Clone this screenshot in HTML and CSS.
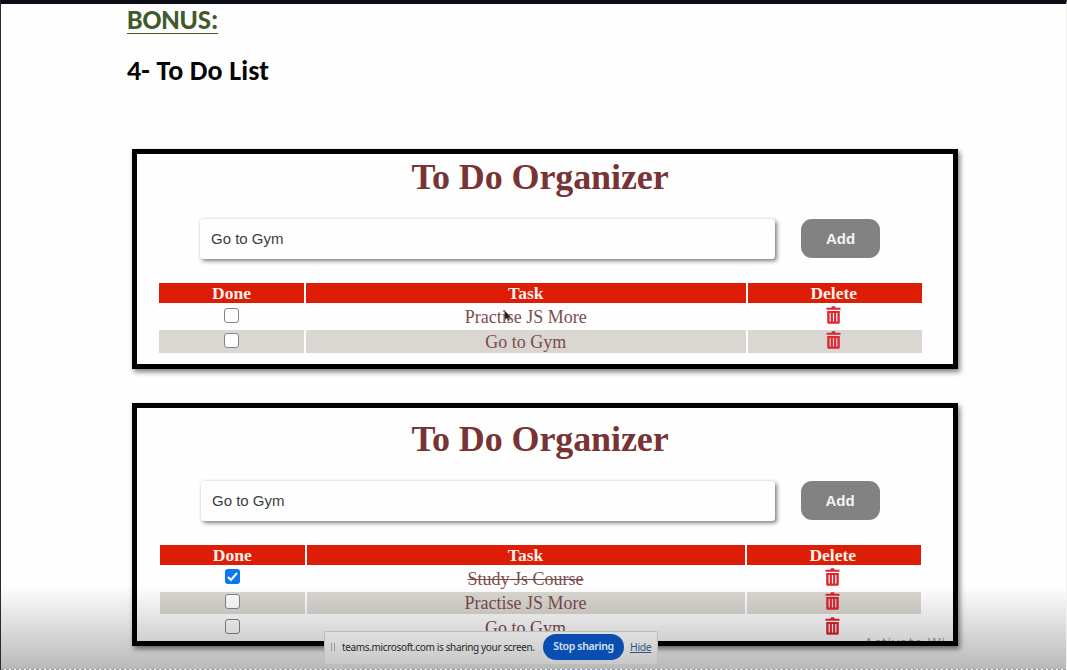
FILE: index.html
```html
<!DOCTYPE html>
<html lang="en">
<head>
<meta charset="utf-8">
<title>To Do List</title>
<link rel="stylesheet" href="styles.css">
</head>
<body>
<svg width="0" height="0" class="defs">
  <symbol id="trash" viewBox="0 0 15 18">
    <path fill-rule="evenodd" d="M6 .3h3l.7 1.5h4.8v2H.5v-2h4.8zM1.2 5h12.6v11.2q0 1.5-1.5 1.5H2.7q-1.5 0-1.5-1.5zM3.6 7v8.5h1.2V7zm3.3 0v8.5h1.2V7zm3.3 0v8.5h1.2V7z"/>
  </symbol>
</svg>
<main class="page">
  <h1 class="bonus">BONUS:</h1>
  <h2 class="heading">4- To Do List</h2>
  <section class="panel first">
    <h3 class="title">To Do Organizer</h3>
    <div class="form"><div class="field">Go to Gym</div><div class="add">Add</div></div>
    <div class="table">
      <div class="row head"><div>Done</div><div>Task</div><div>Delete</div></div>
      <div class="row"><div><span class="box"></span></div><div><span class="task">Practise JS More</span></div><div><svg class="trash"><use href="#trash"/></svg></div></div>
      <div class="row shade"><div><span class="box"></span></div><div><span class="task gym">Go to Gym</span></div><div><svg class="trash"><use href="#trash"/></svg></div></div>
    </div>
  </section>
  <section class="panel second">
    <h3 class="title">To Do Organizer</h3>
    <div class="form"><div class="field">Go to Gym</div><div class="add">Add</div></div>
    <div class="table">
      <div class="row head"><div>Done</div><div>Task</div><div>Delete</div></div>
      <div class="row"><div><span class="box checked"><svg viewBox="0 0 15 15"><path d="M3 8l3 3 6-7" fill="none" stroke="#fff" stroke-width="2"/></svg></span></div><div><span class="task struck">Study Js Course</span></div><div><svg class="trash"><use href="#trash"/></svg></div></div>
      <div class="row shade"><div><span class="box"></span></div><div><span class="task">Practise JS More</span></div><div><svg class="trash"><use href="#trash"/></svg></div></div>
      <div class="row last"><div><span class="box"></span></div><div><span class="task gym">Go to Gym</span></div><div><svg class="trash"><use href="#trash"/></svg></div></div>
    </div>
    <div class="watermark">Activate Wi</div>
  </section>
  <div class="fade"></div>
  <div class="share">
    <span class="grip"></span>
    <span class="message">teams.microsoft.com is sharing your screen.</span>
    <span class="stop">Stop sharing</span>
    <span class="hide">Hide</span>
  </div>
  <svg class="cursor" viewBox="0 0 8 12"><path d="M.5.5v9.5l2.2-2 1.5 3 1.5-.7-1.4-2.9h3z" fill="#222" stroke="#aaa" stroke-width=".4"/></svg>
</main>
</body>
</html>
```
FILE: styles.css
```css
* { box-sizing: border-box; }
body { margin: 0; background: #fefefe; overflow: hidden; }
h1, h2, h3 { margin: 0; }
.defs { position: absolute; }
.page {
  position: relative;
  width: 1067px;
  height: 670px;
  padding: 3px 0 0 126px;
  border-top: 4px solid #0c0e16;
  border-left: 1px solid #2b2b2b;
  border-right: 1px solid #f2f2f2;
  overflow: hidden;
}
.bonus, .heading { font: bold 28px/30px Carlito, Lato, sans-serif; white-space: nowrap; width: max-content; }
.bonus { color: #3f5a2b; height: 27px; line-height: 26px; border-bottom: 1px solid #3f5a2b; letter-spacing: -.15px; }
.heading { color: #050505; margin-top: 22px; letter-spacing: .15px; }
.panel {
  position: relative;
  width: 826px;
  margin-left: 5px;
  border: 5px solid #000;
  box-shadow: 2px 3px 5px rgba(0,0,0,.5);
  background: #fefefe;
  overflow: hidden;
}
.first { height: 220px; margin-top: 63px; padding-top: 3px; }
.second { height: 243px; margin-top: 34px; padding-top: 11px; }
.title { font: bold 36px/40px "Liberation Serif", serif; color: #783434; text-align: center; letter-spacing: -.1px; margin-right: 10px; }
.form { display: flex; gap: 26px; margin: 22px 0 0 63px; height: 40px; }
.second .form { margin-left: 64px; }
.field {
  width: 575px;
  height: 40px;
  padding-left: 11px;
  font: 15px/40px "Liberation Sans", sans-serif;
  color: #3a3f42;
  border-radius: 3px;
  box-shadow: 2px 2px 4px rgba(0,0,0,.5), 0 0 3px rgba(0,0,0,.08);
}
.second .field { width: 573.5px; }
.add {
  width: 79px;
  height: 39px;
  border-radius: 11px;
  background: #828282;
  color: #f4f4f4;
  font: bold 15px/39px "Liberation Sans", sans-serif;
  text-align: center;
}
.table { width: 763px; margin: 24px 0 0 22px; }
.second .table { width: 761px; margin-left: 23px; }
.row { display: grid; grid-template-columns: 145px 439.5px 1fr; gap: 2px; height: 22px; font: 18px/22px "Liberation Serif", serif; color: #7b4d4d; text-align: center; }
.second .row { grid-template-columns: 144.5px 438px 1fr; }
.row > div { display: flex; justify-content: center; align-items: flex-start; }
.row > div:last-child { padding-right: 2px; }
.row.head { height: 20px; line-height: 20px; color: #fff1ea; font-weight: bold; font-size: 17.5px; }
.head > div { background: #dd1d06; }
.row:nth-child(2) { height: 27px; padding-top: 3px; }
.first .shade > div { padding-top: 1px; }
.shade > div { background: #dad6d2; }
.last { padding-top: 3px; }
.box { width: 15px; height: 15px; margin-top: 2px; border: 1px solid #858585; border-radius: 3px; background: #fefefe; }
.checked { border: 0; background: #0b76f0; }
.second .box { margin-top: 1.5px; }
.second .checked { margin-top: 1px; }
.checked svg { display: block; }
.struck { text-decoration: line-through; }
.trash { width: 15px; height: 18px; fill: #dd2630; }
.watermark { position: absolute; right: 7px; bottom: -9px; color: #999; font: 14px/15px "Open Sans", sans-serif; letter-spacing: .9px; }
.fade { position: absolute; left: 0; right: 0; top: 582px; bottom: 0; background: linear-gradient(rgba(0,0,0,0), rgba(0,0,0,.27)); border-bottom: 1px dashed #999; }
.share {
  position: absolute;
  left: 323px;
  top: 627px;
  width: 334px;
  height: 34px;
  padding: 0 6px 2px;
  display: flex;
  align-items: center;
  border: 1px solid #bdbdbd;
  border-radius: 2px;
  background: linear-gradient(#dfdfdf, #c9c9c9);
  font: 10.4px/14px "Noto Sans", sans-serif;
  color: #282828;
  white-space: nowrap;
}
.share > span { flex-shrink: 0; }
.grip { width: 4px; height: 8px; border: solid #999; border-width: 0 1px; margin-right: 7px; }
.message { width: 201px; font-size: 10px; letter-spacing: -.35px; }
.stop { width: 81px; height: 26px; border-radius: 13px; background: #0a4eb1; color: #d8e3f2; font-size: 10.5px; font-weight: 600; letter-spacing: -.35px; line-height: 25px; text-align: center; }
.hide { margin-left: 6px; color: #315580; text-decoration: underline; letter-spacing: -.3px; }
.cursor { position: absolute; left: 503px; top: 306px; width: 8px; height: 12px; }
```
